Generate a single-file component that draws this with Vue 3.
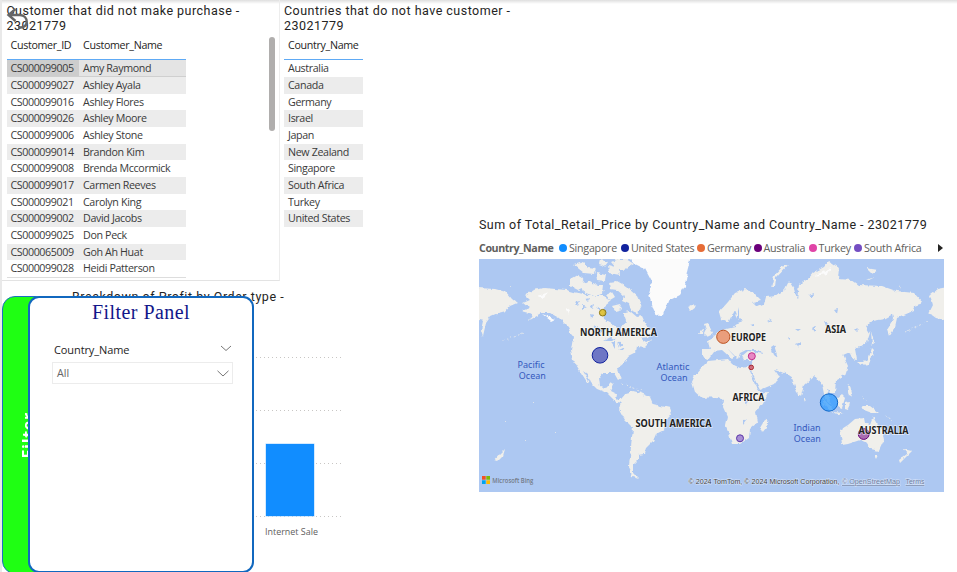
<script setup>
const customers = [
  ['CS000099005', 'Amy Raymond'],
  ['CS000099027', 'Ashley Ayala'],
  ['CS000099016', 'Ashley Flores'],
  ['CS000099026', 'Ashley Moore'],
  ['CS000099006', 'Ashley Stone'],
  ['CS000099014', 'Brandon Kim'],
  ['CS000099008', 'Brenda Mccormick'],
  ['CS000099017', 'Carmen Reeves'],
  ['CS000099021', 'Carolyn King'],
  ['CS000099002', 'David Jacobs'],
  ['CS000099025', 'Don Peck'],
  ['CS000065009', 'Goh Ah Huat'],
  ['CS000099028', 'Heidi Patterson'],
]
const countries = ['Australia', 'Canada', 'Germany', 'Israel', 'Japan', 'New Zealand', 'Singapore', 'South Africa', 'Turkey', 'United States']
const legend = [
  { name: 'Singapore', color: '#118dff', width: 62 },
  { name: 'United States', color: '#12239e', width: 76 },
  { name: 'Germany', color: '#e66c37', width: 56.5 },
  { name: 'Australia', color: '#6b007b', width: 55 },
  { name: 'Turkey', color: '#e044a7', width: 45.5 },
  { name: 'South Africa', color: '#744ec2', width: 70 },
]
const bubbles = [
  { x: 602.7, y: 312.7, r: 3.3, fill: '#d9b300', stroke: '#8f7a18' },
  { x: 600, y: 355.3, r: 7.8, fill: '#3c47b5', stroke: '#12239e' },
  { x: 723.3, y: 336.8, r: 6.6, fill: '#e87e50', stroke: '#bd5423' },
  { x: 751.8, y: 356.2, r: 3.5, fill: '#e35fb4', stroke: '#c22e8c' },
  { x: 751.2, y: 367.4, r: 2.3, fill: '#d64550', stroke: '#a52832' },
  { x: 829, y: 402.5, r: 8.7, fill: '#2a98ff', stroke: '#1268c8' },
  { x: 740, y: 438.3, r: 3.5, fill: '#8c69cc', stroke: '#5b35a8' },
  { x: 863.7, y: 434, r: 5.4, fill: '#8c3a9a', stroke: '#6b007b' },
]
const continents = [
  { t: 'NORTH AMERICA', x: 580, y: 336, w: 77 },
  { t: 'EUROPE', x: 731, y: 341, w: 35 },
  { t: 'ASIA', x: 825, y: 333.2, w: 21 },
  { t: 'AFRICA', x: 732.5, y: 401.4, w: 32 },
  { t: 'SOUTH AMERICA', x: 635.5, y: 427, w: 76 },
  { t: 'AUSTRALIA', x: 858.5, y: 434, w: 50 },
]
const oceans = [
  { a: 'Pacific', x: 531, y: 367.7, w: 27 },
  { a: 'Ocean', x: 532.3, y: 378.7, w: 27 },
  { a: 'Atlantic', x: 673, y: 369.7, w: 33 },
  { a: 'Ocean', x: 674, y: 380.7, w: 27 },
  { a: 'Indian', x: 807, y: 431.2, w: 27 },
  { a: 'Ocean', x: 807.3, y: 442.2, w: 27 },
]
</script>

<template>
  <main class="report">
    <div class="tables">
      <section class="card customers">
        <h2>Customer that did not make purchase - 23021779</h2>
        <svg class="back" viewBox="0 0 24 24"><path d="M9.5 2 L2.5 8 L9.5 14 M3 8 H14 C23 8.500 23 21 14 20.500 H12" /></svg>
        <div class="scroller">
          <div class="grid two">
            <div class="row head"><span>Customer_ID</span><span>Customer_Name</span></div>
            <div v-for="(c, i) in customers" :key="c[0]" class="row" :class="{ band: i % 2 === 1, selected: i === 0 }">
              <span class="id">{{ c[0] }}</span><span>{{ c[1] }}</span>
            </div>
            <div class="cut"></div>
          </div>
          <div class="thumb"></div>
        </div>
      </section>
      <section class="card countries">
        <h2>Countries that do not have customer - 23021779</h2>
        <div class="grid one">
          <div class="row head"><span>Country_Name</span></div>
          <div v-for="(c, i) in countries" :key="c" class="row" :class="{ band: i % 2 === 1 }"><span>{{ c }}</span></div>
        </div>
      </section>
    </div>

    <section class="chart">
      <h2>Breakdown of Profit by Order type -</h2>
      <svg class="plot" viewBox="0 0 341 240">
        <g class="gridlines"><path d="M60 25.500 H341 M60 78.500 H341 M60 131.500 H341 M60 184.500 H341" /></g>
        <rect x="265.500" y="111.500" width="49" height="73" fill="#a9d5ff" />
        <rect x="266" y="112" width="48" height="72" fill="#118dff" />
        <text x="265" y="203" textLength="53" lengthAdjust="spacingAndGlyphs">Internet Sale</text>
      </svg>
    </section>

    <section class="mapcard">
      <h2>Sum of Total_Retail_Price by Country_Name and Country_Name - 23021779</h2>
      <div class="legend">
        <b>Country_Name</b>
        <span v-for="l in legend" :key="l.name" class="item" :style="{ width: l.width + 'px' }"><i :style="{ background: l.color }"></i>{{ l.name }}</span>
        <svg class="next" viewBox="0 0 5 8"><path d="M0 0 L5 4 L0 8Z" /></svg>
      </div>
      <svg class="map" viewBox="479 259 465 233">
        <defs>
          <filter id="coast" x="-5%" y="-5%" width="110%" height="110%">
            <feTurbulence type="fractalNoise" baseFrequency="0.2" numOctaves="2" seed="4" />
            <feDisplacementMap in="SourceGraphic" scale="4" xChannelSelector="R" yChannelSelector="G" />
          </filter>
        </defs>
        <rect x="479" y="259" width="465" height="233" fill="#adc8f2" />
        <g class="land" filter="url(#coast)">
          <!-- eastern Siberia and Kamchatka at the western edge -->
          <path d="M475 288 L495 289 L506 292 L512 299 L517 303 L510 306 L506 311 L498 313 L491 316 L486 323 L483 336 L481 330 L483 321 L475 319Z" />
          <!-- North and Central America -->
          <path d="M522 311 L529 308 L523 303 L530 300 L525 295 L533 290 L545 288 L566 290 L573 292 L579 293 L591 296 L604 296 L611 301 L606 305 L603 312 L604 319 L610 322 L616 327 L620 336 L622 327 L626 321 L623 313 L630 311 L637 317 L642 316 L646 325 L652 331 L648 337 L640 338 L646 342 L652 340 L645 347 L637 346 L636 352 L628 356 L625 362 L618 368 L621 378 L618 380 L614 373 L603 373 L599 378 L600 386 L605 388 L611 382 L614 384 L611 391 L617 394 L616 400 L625 397 L626 403 L616 402 L607 393 L597 389 L591 383 L587 374 L583 371 L590 383 L587 382 L580 371 L573 360 L571 350 L573 338 L568 327 L559 318 L550 313 L541 313 L529 320 L533 314Z" />
          <!-- Arctic islands, Baffin -->
          <path d="M570 279 L577 275 L582 278 L587 285 L578 290 L570 286Z M581 286 L590 281 L598 286 L604 286 L603 294 L594 296 L583 292Z M574 265 L583 262 L588 267 L596 268 L594 274 L584 273Z M596 273 L606 275 L605 281 L597 280Z M608 265 L619 268 L620 275 L609 273Z M611 262 L618 259 L626 259 L634 264 L624 270 L616 268Z M600 260 L608 262 L605 266 L599 264Z M609 282 L617 281 L624 285 L631 290 L638 296 L642 305 L638 313 L631 310 L629 304 L622 301 L624 296 L617 290 L610 289Z M606 295 L612 292 L615 297 L610 300Z M612 306 L620 304 L622 309 L615 311Z" />
          <!-- South America -->
          <path d="M622 398 L626 393 L633 391 L641 393 L650 397 L653 404 L661 406 L670 408 L672 413 L666 421 L664 430 L656 434 L653 441 L646 448 L644 454 L638 455 L638 460 L633 465 L633 473 L639 479 L632 477 L629 466 L631 447 L633 428 L625 420 L619 409Z" />
          <!-- Africa -->
          <path d="M708 361 L728 359 L732 364 L740 368 L749 367 L752 377 L757 388 L761 393 L768 392 L764 401 L756 412 L758 422 L750 429 L749 438 L740 444 L732 444 L729 434 L725 425 L727 416 L723 407 L724 400 L718 397 L702 398 L695 392 L692 382 L695 375 L702 367Z" />
          <path d="M764 421 L768 418 L766 428 L762 433 L760 428Z" />
          <!-- Eurasia -->
          <path d="M702 349 L710 349 L708 342 L714 336 L722 330 L735 327 L737 318 L734 311 L728 323 L721 319 L719 312 L728 302 L735 293 L745 289 L755 294 L761 300 L752 302 L757 307 L764 304 L766 297 L776 296 L785 289 L789 281 L794 289 L797 299 L799 285 L809 278 L813 273 L824 267 L829 261 L839 268 L838 279 L852 280 L859 285 L882 286 L896 291 L914 293 L923 303 L914 306 L913 311 L897 318 L895 327 L889 336 L887 330 L894 319 L893 314 L884 319 L873 321 L866 326 L870 333 L867 342 L855 349 L857 360 L852 359 L850 352 L843 355 L848 366 L845 375 L836 380 L835 393 L830 393 L829 390 L827 389 L830 400 L833 406 L825 399 L822 384 L815 375 L804 385 L801 396 L798 395 L792 378 L785 373 L774 370 L779 377 L774 384 L760 390 L752 374 L751 366 L753 360 L744 360 L742 356 L748 351 L763 354 L758 350 L746 350 L740 353 L738 359 L733 354 L727 348 L734 356 L731 358 L722 350 L714 351 L708 359 L702 357Z" />
          <path d="M771 287 L774 276 L782 267 L789 264 L776 278 L775 287Z M866 280 L875 277 L869 280Z M866 268 L878 270 L872 274Z" />
          <path d="M704 334 L706 330 L704 324 L708 323 L713 334 L707 337Z M701 331 L704 328 L703 334 L699 334Z M687 307 L693 304 L696 307 L691 311Z" />
          <path d="M857 362 L864 362 L869 357 L872 348 L874 350 L869 364 L861 365Z M871 331 L874 342 L872 345Z" />
          <path d="M930 295 L938 289 L948 287 L948 321 L936 318 L929 313 L933 305Z" />
          <!-- Southeast Asia and Oceania -->
          <path d="M837 399 L842 395 L845 398 L842 408 L837 406Z M823 398 L834 410 L831 412 L823 403Z M845 403 L850 402 L848 410 L845 409Z M832 412 L844 413 L839 415Z M847 386 L850 385 L853 398 L849 396Z M862 406 L870 406 L879 413 L872 413 L864 410Z M803 397 L806 399 L805 402Z" />
          <path d="M840 430 L848 425 L855 419 L864 418 L865 423 L870 425 L873 417 L877 424 L882 429 L884 440 L879 451 L871 449 L865 442 L860 440 L848 444 L842 445Z M874 455 L878 455 L876 459Z M903 449 L912 451 L905 458 L900 463 L899 460 L907 454Z M494 461 L500 454 L505 449 L503 456 L497 462Z" />
        </g>
        <g filter="url(#coast)">
          <path fill="#fbfbfb" d="M630 256 L691 256 L687 272 L685 286 L680 295 L668 301 L663 315 L657 316 L653 308 L649 294 L652 282 L645 269 L633 263Z" />
          <path fill="#fbfbfb" d="M538 296 L549 292 L544 298Z M542 314 L555 319 L551 321Z M565 308 L570 310 L568 315Z M813 276 L825 271 L831 268 L828 274Z" />
          <path fill="#adc8f2" d="M590 306 l4 -2 l-1 4z M582 305 l4 2 l-4 2z M594 325 l5 2 l-4 1z M585 299 l5 -1 l-2 4z M575 303 l5 -2 l-2 5z M590 314 l4 1 l-3 3z M597 308 l3 -2 l0 5z M600 330 l3 -1 l-1 5z M624 330 l4 0 l-2 3z M634 326 l3 1 l-2 3z M603 341 l8 -4 l5 2 l-3 2z M612 344 l3 -3 l0 8z M618 342 l5 3 l-3 2z M619 350 l6 -3 l-2 3z M809 295 l5 -2 l-1 5z M834 310 l4 -1 l-1 5z M824 321 l5 2 l-3 3z M795 329 l6 0 l-3 2z M812 328 l3 -2 l0 6z M796 344 l5 -2 l-2 5z M788 338 l2 -2 l0 4z M854 329 l4 0 l-2 2z M771 347 l3 -2 l4 13 l-4 -3z M744 399 l4 1 l-2 6z M743 419 l3 2 l-3 4z M739 307 l-4 17 l8 -3 l-4 -3z M767 321 l4 -2 l1 3z M750 325 l4 -1 l0 3z" />
          <path class="islands" d="M523 333 l-9 4 l-11 3 M928 321 l-10 5 l-13 6 M622 384 l12 4 l8 3 M643 395 l1 3 M862 398 l5 2 M885 416 l8 4 M505 421 l1 1 M534 402 l1 1 M554 431 l1 1 M525 440 l1 1 M900 286 l2 1 M510 287 l3 1" />
        </g>
        <circle v-for="b in bubbles" :key="b.x" :cx="b.x" :cy="b.y" :r="b.r" :fill="b.fill" :stroke="b.stroke" fill-opacity=".72" />
        <text v-for="c in continents" :key="c.t" class="continent" :x="c.x" :y="c.y" :textLength="c.w" lengthAdjust="spacingAndGlyphs">{{ c.t }}</text>
        <text v-for="o in oceans" :key="o.x" class="ocean" :x="o.x" :y="o.y" :textLength="o.w" lengthAdjust="spacingAndGlyphs">{{ o.a }}</text>
        <rect x="482" y="476" width="3.700" height="3.700" fill="#f25022" />
        <rect x="486.300" y="476" width="3.700" height="3.700" fill="#7fba00" />
        <rect x="482" y="480.300" width="3.700" height="3.700" fill="#00a4ef" />
        <rect x="486.300" y="480.300" width="3.700" height="3.700" fill="#ffb900" />
        <text class="bing" x="492.300" y="482.700" textLength="41" lengthAdjust="spacingAndGlyphs">Microsoft Bing</text>
        <text class="credit" x="688.500" y="484" textLength="151" lengthAdjust="spacingAndGlyphs">© 2024 TomTom, © 2024 Microsoft Corporation,</text>
        <text class="credit link" x="842" y="484" textLength="58" lengthAdjust="spacingAndGlyphs">© OpenStreetMap</text>
        <text class="credit link" x="905.500" y="484" textLength="19" lengthAdjust="spacingAndGlyphs">Terms</text>
      </svg>
    </section>

    <aside class="drawer">
      <div class="tab"><span>Filter</span></div>
      <div class="panel">
        <h1>Filter Panel</h1>
        <div class="field">
          <span>Country_Name</span>
          <svg class="chev" viewBox="0 0 12 7"><path d="M1 1 L6 5.500 L11 1" /></svg>
        </div>
        <div class="select">
          <span>All</span>
          <svg class="chev" viewBox="0 0 12 7"><path d="M.5 .8 L6 6 L11.500 .8" /></svg>
        </div>
      </div>
    </aside>
  </main>
</template>

<style>
body { background: #fff; overflow: hidden; }
</style>

<style scoped>
* { box-sizing: border-box; }
.report {
  position: relative;
  width: 957px;
  height: 572px;
  overflow: hidden;
  display: grid;
  grid-template-columns: 479px 478px;
  grid-template-rows: 281px 291px;
  border-left: 2px solid #e9e9e9;
  background: linear-gradient(#dedede, #efefef 2px, #fff 4px) no-repeat 0 0 / 100% 4px, #fff;
  font-family: "Open Sans", "Noto Sans", sans-serif;
  color: #3a3a3a;
}
h2 {
  margin: 0;
  font: 400 12.5px/14.6px Roboto, sans-serif;
  letter-spacing: .48px;
  color: #252423;
}
.tables { grid-column: 1; grid-row: 1; display: flex; }
.card { padding-top: 4px; }
.customers {
  position: relative;
  flex: none;
  width: 278px;
  padding-left: 4.5px;
  border-right: 1px solid #ededed;
  border-bottom: 1px solid #e3e3e3;
}
.customers h2 { width: 240px; }
.countries { padding-left: 4px; width: 235px; flex: none; }
.countries h2 { letter-spacing: .48px; }
.back { position: absolute; left: 4px; top: 7px; width: 24px; height: 24px; fill: none; stroke: #666; stroke-width: 2.4; }
.scroller { display: flex; justify-content: space-between; padding-right: 4px; }
.thumb { width: 6px; height: 94px; margin-top: 4px; border-radius: 3px; background: #b0aead; }
.grid { font-size: 10.7px; letter-spacing: -.36px; white-space: nowrap; }
.two { width: 179.5px; height: 244px; }
.one { width: 79px; }
.row { display: flex; height: 16.67px; line-height: 16.5px; }
.row span { padding-left: 4px; flex: 1; }
.two .row span:first-child { flex: 0 0 72.5px; }
.head { height: 26.5px; line-height: 24.5px; margin-bottom: .6px; border-bottom: 1px solid #5eaaf5; color: #252423; letter-spacing: -.32px; }
.band { background: #ececec; }
.selected { background: #e4e4e4; border-bottom: 1px solid #cfcfcf; }
.selected .id { background: #cdcdcd; }
.id { letter-spacing: -.41px; }
.cut { height: 1px; background: #ddd; }
.chart { grid-column: 1; grid-row: 2; padding-top: 8px; }
.chart h2 { padding-left: 70px; line-height: 15px; letter-spacing: .54px; }
.plot { display: block; width: 341px; height: 240px; margin: 28px 0 0 -2px; }
.gridlines { stroke: #c8c6c4; stroke-dasharray: 1 3; fill: none; }
.plot text { font-size: 9px; fill: #605e5c; }
.mapcard { grid-column: 2; grid-row: 1 / 3; padding: 217px 0 0; margin-left: -2px; }
.mapcard h2 { line-height: 15px; white-space: nowrap; letter-spacing: .435px; }
.legend {
  display: flex;
  align-items: center;
  height: 16px;
  margin: 8px 0 3px;
  font-size: 10.7px;
  letter-spacing: -.25px;
  color: #605e5c;
  white-space: nowrap;
}
.legend b { width: 80px; letter-spacing: -.42px; font-weight: 700; }
.item { display: flex; align-items: center; gap: 2px; flex: none; }
.item i { width: 8px; height: 8px; border-radius: 50%; flex: none; }
.next { width: 5px; height: 8px; margin-left: 14px; fill: #252423; }
.map { display: block; width: 465px; height: 233px; }
.land { fill: #f0efeb; }
.islands { fill: none; stroke: #dfe5ec; stroke-width: 1; stroke-dasharray: 2 2; }
.continent { font-family: "Noto Sans", sans-serif; font-size: 10.2px; font-weight: 700; fill: #222; paint-order: stroke; stroke: #fff; stroke-opacity: .6; stroke-width: 1.5px; }
.ocean { font-family: "Noto Sans", sans-serif; font-size: 9.2px; fill: #3459bd; text-anchor: middle; }
.bing { font-size: 6.6px; fill: #737a86; font-weight: 600; }
.credit { font: 6.8px "Liberation Sans", sans-serif; fill: #444; paint-order: stroke; stroke: #fff; stroke-opacity: .5; stroke-width: 1px; }
.link { fill: #6b7c9f; text-decoration: underline; }
.drawer { position: absolute; left: 0; top: 296px; width: 252px; height: 278px; display: flex; }
.tab {
  width: 46px;
  height: 278px;
  border: 1px solid #1b70c0;
  border-radius: 13px;
  background: #1fff13;
  display: flex;
  align-items: center;
  padding: 0 0 0 15px;
}
.tab span { writing-mode: vertical-rl; transform: rotate(180deg); color: #fff; font: 700 16px/20px "Open Sans", sans-serif; letter-spacing: .7px; }
.panel {
  position: relative;
  z-index: 1;
  margin-left: -20px;
  width: 226px;
  height: 277px;
  border: 2px solid #1168bf;
  border-radius: 11px;
  background: #fff;
  padding: 2px 19px 0 22px;
}
h1 { margin: 0 0 0 -3px; font: 400 20px/24px "Liberation Serif", serif; letter-spacing: .45px; color: #12178a; text-align: center; }
.field { display: flex; justify-content: space-between; align-items: center; height: 18px; margin-top: 17px; padding: 0 1px 0 2px; font: 11px/18px "Open Sans", sans-serif; letter-spacing: -.1px; color: #252423; }
.field .chev { margin-bottom: 3px; }
.select { display: flex; justify-content: space-between; align-items: center; height: 22px; margin-top: 3px; padding: 0 3px 0 4px; border: 1px solid #ececec; font-size: 10.7px; color: #666; }
.chev { width: 12px; height: 7px; fill: none; stroke: #777; stroke-width: 1; }
</style>
